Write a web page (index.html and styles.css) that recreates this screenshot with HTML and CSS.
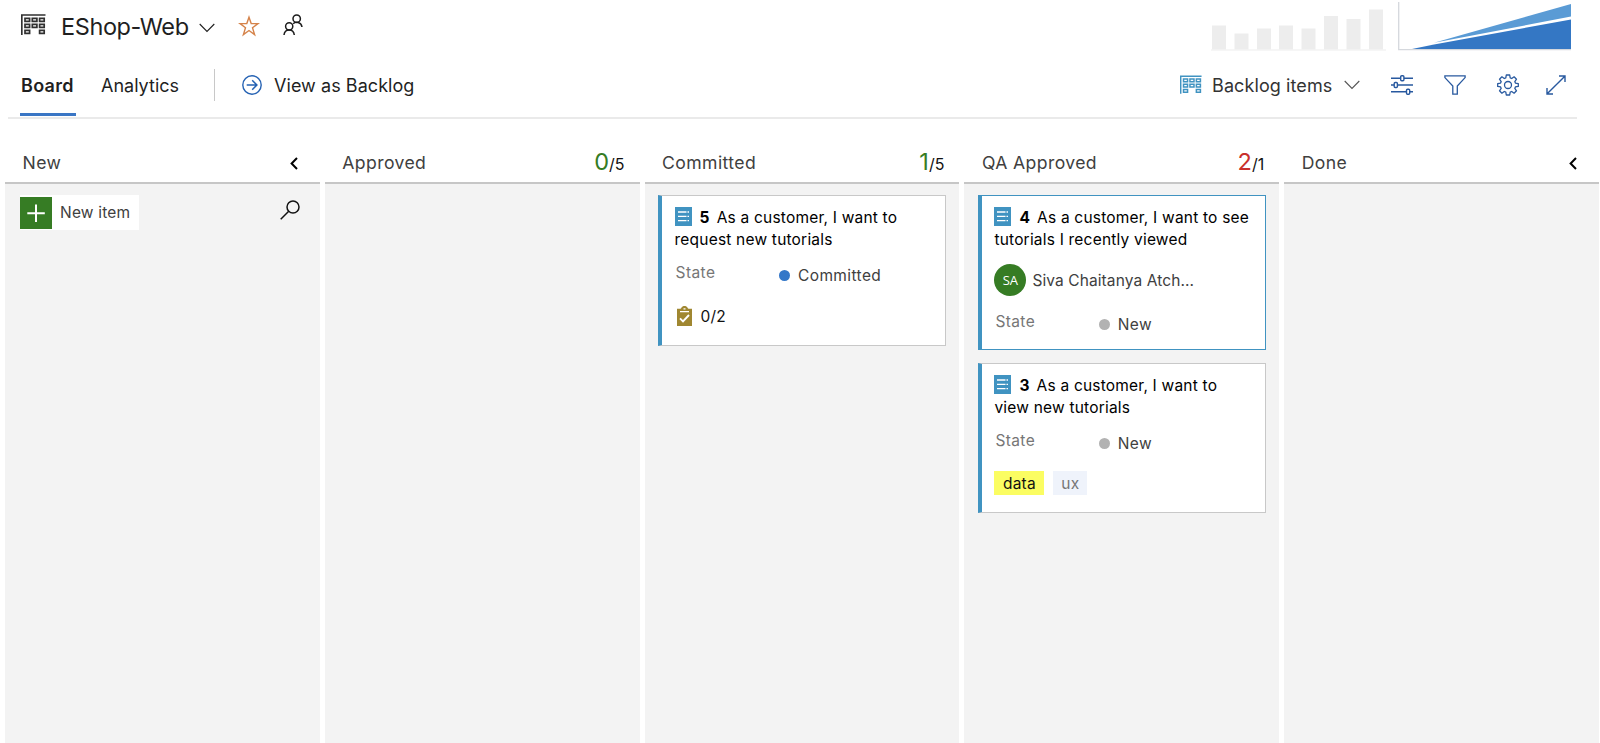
FILE: index.html
```html
<!DOCTYPE html>
<html lang="en">
<head>
<meta charset="utf-8">
<title>EShop-Web Board</title>
<link rel="stylesheet" href="styles.css">
</head>
<body>
<svg class="defs" width="0" height="0">
  <symbol id="board" viewBox="0 0 25 21">
    <path d="M.8 21V1H24.500" fill="none" stroke="currentColor" stroke-width="1.7"/>
    <path d="M4 4.300h4.600v3.100H4zM11.300 4.300h4.600v3.100h-4.600zM18.600 4.300h4.600v3.100h-4.600zM4 10.300h4.600v3.100H4zM11.300 10.300h4.600v3.100h-4.600zM18.600 10.300h4.600v3.100h-4.600zM4 16.300h4.600v3.100H4zM18.600 16.300h4.600v3.100h-4.600z" fill="none" stroke="currentColor" stroke-width="1.7"/>
  </symbol>
  <symbol id="chevron" viewBox="0 0 16 10"><path d="M.7 1 8 8.500 15.300 1" fill="none" stroke="currentColor" stroke-width="1.1"/></symbol>
  <symbol id="collapse" viewBox="0 0 8 13"><path d="M7 1 1.600 6.500 7 12" fill="none" stroke="currentColor" stroke-width="2"/></symbol>
  <symbol id="item" viewBox="0 0 17 19">
    <path d="M0 0h17v19H0z" fill="#4093c1"/>
    <path d="M3 5h8.500M3 9.300h8.500M3 13.600h8.500M12.500 5H14M12.500 9.300H14M12.500 13.600H14" stroke="#fff" stroke-width="1.300"/>
  </symbol>
</svg>

<header class="title-bar">
  <svg class="board-icon"><use href="#board"/></svg>
  <h1 class="title">EShop-Web</h1>
  <svg class="chev title-chev"><use href="#chevron"/></svg>
  <svg class="star" viewBox="0 0 22 22"><path d="M11 2.200 13.200 8.600H20L14.500 12.700 16.600 19.600 11 15.500 5.400 19.600 7.500 12.700 2 8.600H8.800Z" fill="none" stroke="#d5834a" stroke-width="1.400"/></svg>
  <svg class="people" viewBox="0 0 20 22" fill="none" stroke="#1c1c1c" stroke-width="1.500">
    <circle cx="13.700" cy="4.700" r="3.700"/><path d="M10.200 9.700C12.500 7.200 18.200 7.800 19 13"/>
    <circle cx="6.200" cy="12.300" r="3.600"/><path d="M1 21C1.700 14.400 10.600 14.400 11.300 21"/>
  </svg>
  <svg class="bars" viewBox="0 0 176 48" fill="#ededed">
    <path d="M1 22.500h14v24H1zM23.500 30.500h14v16h-14zM46 25.500h14v21H46zM68 22.500h14v24H68zM90.500 25.500h14v21h-14zM113 13h14v33.500h-14zM135.500 16h14v30.500h-14zM158 6.500h14v40h-14z"/><path d="M0 46.500h175v1H0z"/>
  </svg>
  <svg class="flow" viewBox="0 0 174 50">
    <path d="M36 40.800 173 2V14.500Z" fill="#5a9bd5"/>
    <path d="M14 47 36 42.500 173 17.500V47Z" fill="#3477c4"/>
    <path d="M.7 0V47.700H173" fill="none" stroke="#d5d8dd" stroke-width="1.300"/>
  </svg>
</header>

<nav class="tabs">
  <a class="tab active">Board</a>
  <a class="tab analytics">Analytics</a>
  <span class="divider"></span>
  <svg class="arrow" viewBox="0 0 20 20" fill="none" stroke="#2562b3" stroke-width="1.400"><circle cx="10" cy="10" r="9.200"/><path d="M4.700 10h10M10.200 5.300 14.900 10l-4.700 4.700" stroke-width="1.500"/></svg>
  <a class="tab backlog">View as Backlog</a>
  <svg class="board-small"><use href="#board"/></svg>
  <span class="items-label">Backlog items</span>
  <svg class="chev items-chev"><use href="#chevron"/></svg>
  <svg class="tool sliders" viewBox="0 0 22 20" fill="#fff" stroke="#28599f" stroke-width="1.400"><path d="M0 3.300h22M0 10h22M0 16.700h22"/><rect x="9.700" y=".8" width="3.200" height="5" rx="1"/><rect x="3.200" y="7.500" width="3.200" height="5" rx="1"/><rect x="15.500" y="14.200" width="3.200" height="5" rx="1"/></svg>
  <svg class="tool funnel" viewBox="0 0 22 20" fill="none" stroke="#28599f" stroke-width="1.300"><path d="M.9.900H21.100V2.600L13.300 11V19.100H8.800V11L.9 2.600Z"/></svg>
  <svg class="tool gear" viewBox="0 0 22 22" fill="none" stroke="#28599f" stroke-width="1.300" stroke-linejoin="round"><path d="M9.300 1h3.400l.5 2.900 1.500.6 2.400-1.700 2.400 2.400-1.700 2.400.6 1.500 2.900.5v2.800l-2.900.5-.6 1.500 1.700 2.400-2.400 2.400-2.400-1.700-1.500.6-.5 2.900H9.300l-.5-2.900-1.500-.6-2.400 1.700-2.400-2.400 1.700-2.400-.6-1.500L.7 12.400V9.600l2.900-.5.600-1.500-1.700-2.400 2.400-2.400 2.400 1.700 1.500-.6Z"/><circle cx="11" cy="11" r="3.500"/></svg>
  <svg class="tool expand" viewBox="0 0 20 20" fill="none" stroke="#28599f" stroke-width="1.400"><path d="M1.200 18.800 18.800 1.200M13 1h6v6M1 13v6h6"/></svg>
</nav>

<main class="board">
  <section class="column">
    <div class="column-head"><h2 class="column-name">New</h2><svg class="collapse"><use href="#collapse"/></svg></div>
    <div class="column-body new-body">
      <button class="new-item"><svg class="plus" viewBox="0 0 32 32"><path d="M0 0h32v32H0z" fill="#367c24"/><path d="M16 7.500v17.500M7.300 16.300h17.500" stroke="#fff" stroke-width="2"/></svg>New item</button>
      <svg class="search" viewBox="0 0 20 20" fill="none" stroke="#111" stroke-width="1.500"><circle cx="13" cy="7" r="6"/><path d="M8.700 11.300.7 19.300"/></svg>
    </div>
  </section>
  <section class="column">
    <div class="column-head"><h2 class="column-name">Approved</h2><span class="count"><b class="current">0</b>/5</span></div>
    <div class="column-body"></div>
  </section>
  <section class="column">
    <div class="column-head"><h2 class="column-name">Committed</h2><span class="count"><b class="current">1</b>/5</span></div>
    <div class="column-body">
      <article class="card card-committed">
        <div class="card-title"><svg class="item-icon"><use href="#item"/></svg><b class="card-id">5</b>As a customer, I want to<br>request new tutorials</div>
        <div class="state"><span class="state-label">State</span><i class="dot blue"></i><span class="state-value">Committed</span></div>
        <div class="tasks"><svg class="clip" viewBox="0 0 15 20"><path d="M0 2.700h3.500C4.500 2.700 4.500 0 7.500 0s3 2.700 4 2.700H15V20H0Z" fill="#a08731"/><path d="M3 5.600h9M6.500 2.800h2" stroke="#fff" stroke-width="1.300"/><path d="m3 12.400 3 3 6-6.400" fill="none" stroke="#fff" stroke-width="1.900"/></svg>0/2</div>
      </article>
    </div>
  </section>
  <section class="column">
    <div class="column-head"><h2 class="column-name">QA Approved</h2><span class="count"><b class="current over">2</b>/1</span></div>
    <div class="column-body">
      <article class="card card-selected">
        <div class="card-title"><svg class="item-icon"><use href="#item"/></svg><b class="card-id">4</b>As a customer, I want to see<br>tutorials I recently viewed</div>
        <div class="person"><span class="avatar">SA</span>Siva Chaitanya Atch...</div>
        <div class="state"><span class="state-label">State</span><i class="dot"></i><span class="state-value">New</span></div>
      </article>
      <article class="card card-tagged">
        <div class="card-title"><svg class="item-icon"><use href="#item"/></svg><b class="card-id">3</b>As a customer, I want to<br>view new tutorials</div>
        <div class="state"><span class="state-label">State</span><i class="dot"></i><span class="state-value">New</span></div>
        <div class="tags"><span class="tag data">data</span><span class="tag ux">ux</span></div>
      </article>
    </div>
  </section>
  <section class="column">
    <div class="column-head"><h2 class="column-name">Done</h2><svg class="collapse"><use href="#collapse"/></svg></div>
    <div class="column-body"></div>
  </section>
</main>
</body>
</html>
```
FILE: styles.css
```css
* { box-sizing: border-box; }
body {
  margin: 0;
  height: 743px;
  overflow: hidden;
  display: flex;
  flex-direction: column;
  background: #fff;
  color: #1f1f1f;
  font-family: Inter, "Liberation Sans", sans-serif;
  font-size: 15.5px;
  letter-spacing: 0.2px;
}
svg { flex: none; display: block; }
.defs { height: 0; }
h1, h2 { margin: 0; font-weight: 400; }

/* Title bar */
.title-bar { display: flex; align-items: flex-start; height: 52px; flex: none; padding-left: 21px; }
.board-icon { width: 25px; height: 21px; margin-top: 14px; color: #303030; }
.title { margin-left: 15px; width: 126px; font-size: 23.5px; line-height: 53px; letter-spacing: -0.4px; white-space: nowrap; }
.chev { width: 16px; height: 10px; }
.title-chev { margin: 23px 0 0 12px; }
.star { width: 22px; height: 22px; margin: 15px 0 0 23px; }
.people { width: 20px; height: 22px; margin: 14px 0 0 23px; }
.bars { width: 176px; height: 48px; margin: 3px 0 0 auto; }
.flow { width: 174px; height: 50px; margin: 2px 28px 0 11px; }

/* Tabs and toolbar */
.tabs { display: flex; align-items: center; height: 67px; flex: none; margin: 0 23px 0 8px; padding-left: 12px; border-bottom: 2px solid #eaeaea; font-size: 18px; letter-spacing: 0; white-space: nowrap; }
.tab { height: 64px; line-height: 67px; }
.active { width: 56px; margin-top: -1px; padding-left: 1px; font-weight: 600; letter-spacing: 0.3px; border-bottom: 3px solid #3a76c5; }
.analytics { width: 87px; margin: -1px 0 0 25px; }
.divider { width: 1px; height: 32px; margin-left: 26px; background: #c8c8c8; }
.arrow { width: 20px; height: 20px; margin: 1px 0 0 27px; }
.backlog { margin: -1px 0 0 12px; letter-spacing: 0.05px; }
.board-small { width: 22px; height: 19px; margin-left: auto; color: #4093c1; }
.items-label { width: 121px; margin: 2px 0 0 10px; letter-spacing: 0.1px; color: #333; }
.items-chev { margin-left: 11px; color: #555; }
.tool { width: 22px; height: 20px; }
.sliders { margin-left: 31px; }
.funnel { margin-left: 31px; }
.gear { height: 22px; margin-left: 31px; }
.expand { width: 20px; margin: 0 11px 0 27px; }

/* Board */
.board { display: grid; grid-template-columns: repeat(5, 1fr); gap: 5px; flex: 1; margin: 23px 1px 0 5px; }
.column { display: flex; flex-direction: column; }
.column-head { display: flex; justify-content: space-between; align-items: center; height: 42px; padding: 0 15px 0 17.5px; border-bottom: 2px solid #c6c6c6; }
.column-name { padding-top: 2px; font-size: 17.6px; line-height: 40px; letter-spacing: 0.4px; color: #404040; }
.collapse { width: 8px; height: 13px; margin: 3px 7px 0 0; color: #000; }
.count { padding-top: 2px; font-size: 16px; line-height: 38px; letter-spacing: 0; color: #111; }
.current { font-size: 23.5px; font-weight: 400; color: #367c24; }
.over { color: #c9302c; }
.column-body { flex: 1; display: flex; flex-direction: column; gap: 13px; padding: 11px 13px 11px 13.4px; background: #f3f3f3; }
.new-body { flex-direction: row; justify-content: space-between; align-items: flex-start; padding: 11px 20px 0 15px; }
.new-item { display: flex; align-items: center; gap: 8px; width: 119px; height: 35px; padding: 0; border: 0; background: #fff; color: #404040; font: inherit; letter-spacing: 0.2px; white-space: nowrap; }
.plus { width: 32px; height: 32px; }
.search { width: 20px; height: 20px; margin-top: 5px; }

/* Cards */
.card { flex: none; display: flex; flex-direction: column; padding: 11px 0 0 12.6px; background: #fff; border: 1px solid #c8c8c8; border-left: 4px solid #4093c1; white-space: nowrap; }
.card-committed { height: 151px; }
.card-selected { height: 155px; border-color: #4093c1; }
.card-tagged { height: 150px; }
.card-title { line-height: 21.5px; color: #000; }
.item-icon { display: inline-block; width: 17px; height: 19px; margin-right: 8px; vertical-align: -3px; }
.card-id { margin-right: 7px; font-weight: 700; }
.state { display: flex; align-items: center; height: 22px; margin-top: 14px; padding-left: 1px; }
.state-label { width: 103.4px; margin-top: -5px; letter-spacing: 0.4px; color: #767676; }
.dot { width: 11px; height: 11px; margin-top: 1px; border-radius: 50%; background: #b2b2b2; }
.blue { background: #3477c8; }
.state-value { margin-left: 8px; letter-spacing: 0.4px; color: #404040; }
.tasks { display: flex; align-items: center; gap: 9px; height: 22px; margin: 19px 0 0 2px; color: #111; }
.clip { width: 15px; height: 20px; }
.person { display: flex; align-items: center; gap: 6px; height: 32px; margin-top: 14px; letter-spacing: 0.1px; color: #404040; }
.card-selected .state { margin-top: 17px; }
.avatar { width: 32px; height: 32px; border-radius: 50%; background: #367c24; color: #fff; font-family: "Open Sans", sans-serif; font-size: 13px; letter-spacing: 0; line-height: 32px; text-align: center; }
.tags { display: flex; gap: 9px; margin-top: 17px; }
.tag { height: 24px; line-height: 25px; text-align: center; }
.data { width: 50px; background: #fbfd62; color: #111; }
.ux { width: 34px; background: #eff3fb; color: #767676; }
```
